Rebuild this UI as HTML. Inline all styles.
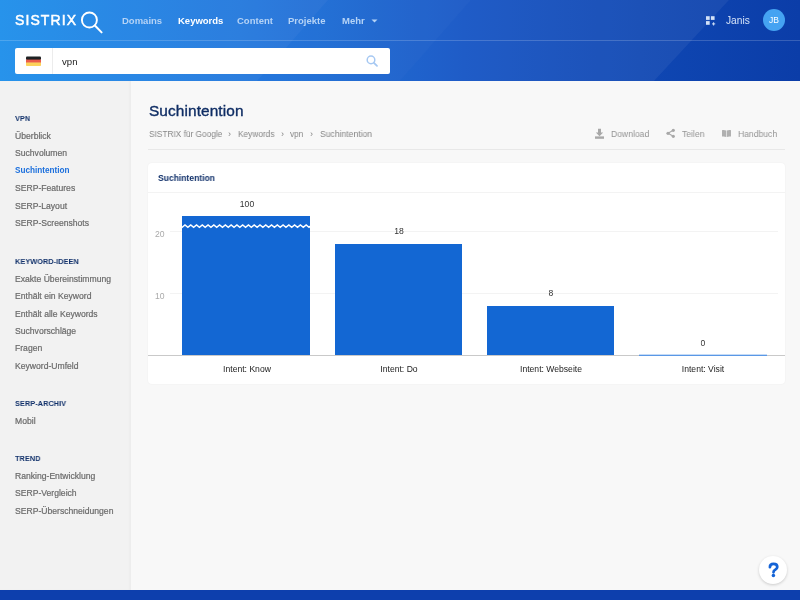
<!DOCTYPE html>
<html><head><meta charset="utf-8"><style>
*{margin:0;padding:0;box-sizing:border-box}
html,body{width:800px;height:600px;overflow:hidden;background:#f8f8f8;font-family:"Liberation Sans",sans-serif}
.t{position:absolute;line-height:0;white-space:nowrap;will-change:transform}
.a{position:absolute}
</style></head><body>
<div class="a" style="left:0;top:0;width:800px;height:81px;overflow:hidden;background:linear-gradient(90deg,#0f87ea 0%,#1470dc 30%,#1353c4 58%,#0f47b3 80%,#0b3da8 100%)"><div class="a" style="left:0;top:0;width:800px;height:81px;background:rgba(255,255,255,0.035);clip-path:polygon(0 0,328px 0,257px 81px,0 81px)"></div><div class="a" style="left:0;top:0;width:800px;height:81px;background:rgba(255,255,255,0.02);clip-path:polygon(0 0,471px 0,400px 81px,0 81px)"></div><div class="a" style="left:0;top:0;width:800px;height:81px;background:rgba(255,255,255,0.055);clip-path:polygon(0 0,729px 0,654px 81px,0 81px)"></div><div class="a" style="left:0;top:40px;width:800px;height:1px;background:rgba(255,255,255,0.18)"></div></div><div class="t" style="left:15px;top:20.35px;font-size:14px;color:#fff;letter-spacing:1.1px;-webkit-text-stroke:0.5px #fff;">SISTRIX</div>
<svg class="a" style="left:78px;top:9px" width="26" height="26" viewBox="0 0 26 26"><circle cx="11.4" cy="11" r="7.5" fill="none" stroke="#fff" stroke-width="1.9"/><line x1="16.9" y1="16.5" x2="23.6" y2="23.4" stroke="#fff" stroke-width="2" stroke-linecap="round"/></svg>
<div class="t" style="left:122px;top:20.91px;font-size:9.5px;color:#b5d3f6;font-weight:bold;">Domains</div>
<div class="t" style="left:177.5px;top:20.91px;font-size:9.5px;color:#fff;font-weight:bold;">Keywords</div>
<div class="t" style="left:237px;top:20.91px;font-size:9.5px;color:#b5d3f6;font-weight:bold;">Content</div>
<div class="t" style="left:288px;top:20.91px;font-size:9.5px;color:#b5d3f6;font-weight:bold;">Projekte</div>
<div class="t" style="left:341.5px;top:20.91px;font-size:9.5px;color:#b5d3f6;font-weight:bold;">Mehr</div>
<svg class="a" style="left:371px;top:19px" width="7" height="4" viewBox="0 0 7 4"><path d="M0.5 0.5H6.5L3.5 3.5Z" fill="#b5d3f6"/></svg>
<svg class="a" style="left:705px;top:15px" width="12" height="12" viewBox="0 0 12 12" fill="#d3e2f7"><rect x="1" y="1.2" width="3.7" height="3.7"/><rect x="5.9" y="1.2" width="3.7" height="3.7"/><rect x="1" y="6.1" width="3.7" height="3.7"/><rect x="8.1" y="7.3" width="1" height="3.2"/><rect x="7" y="8.4" width="3.2" height="1"/></svg>
<div class="t" style="left:726px;top:20.67px;font-size:10.2px;color:#d6e4f8;">Janis</div>
<div class="a" style="left:763px;top:9px;width:22px;height:22px;border-radius:50%;background:#45a3f2"></div>
<div class="t" style="left:774px;top:20.25px;font-size:8.5px;color:#fff;transform:translateX(-50%);">JB</div>
<div class="a" style="left:15px;top:48px;width:375px;height:26px;background:#fff;border-radius:2px"></div>
<div class="a" style="left:52px;top:48px;width:1px;height:26px;background:#ececec"></div>
<svg class="a" style="left:26px;top:56px" width="16" height="11" viewBox="0 0 16 11"><rect x="0" y="0.4" width="15" height="3.6" rx="1" fill="#1e2224"/><rect x="0" y="3.6" width="15" height="3.3" fill="#ea5b4b"/><rect x="0" y="6.7" width="15" height="3.3" rx="0.8" fill="#fcd35b"/><rect x="0" y="6.7" width="15" height="1.5" fill="#fcd35b"/></svg>
<div class="t" style="left:62px;top:61.87px;font-size:9.6px;color:#222;">vpn</div>
<svg class="a" style="left:365px;top:53px" width="16" height="16" viewBox="0 0 16 16"><circle cx="6" cy="6.9" r="3.8" fill="none" stroke="#a6c8f2" stroke-width="1.5"/><line x1="8.9" y1="9.8" x2="12" y2="12.9" stroke="#a6c8f2" stroke-width="1.8" stroke-linecap="round"/></svg>
<div class="a" style="left:0;top:81px;width:131px;height:509px;background:#f2f2f2;box-shadow:inset -2px 0 2px rgba(0,0,0,0.025)"></div>
<div class="t" style="left:15px;top:119.39px;font-size:8.1px;color:#10306a;font-weight:bold;letter-spacing:0.1px;transform:scaleX(0.9);transform-origin:0 0;">VPN</div>
<div class="t" style="left:15px;top:136.22px;font-size:8.6px;color:#6a6a6a;-webkit-text-stroke:0.2px #6a6a6a;">Überblick</div>
<div class="t" style="left:15px;top:153.22px;font-size:8.6px;color:#6a6a6a;-webkit-text-stroke:0.2px #6a6a6a;">Suchvolumen</div>
<div class="t" style="left:15px;top:171.36px;font-size:8.2px;color:#1b6fdd;font-weight:bold;">Suchintention</div>
<div class="t" style="left:15px;top:188.22px;font-size:8.6px;color:#6a6a6a;-webkit-text-stroke:0.2px #6a6a6a;">SERP-Features</div>
<div class="t" style="left:15px;top:206.22px;font-size:8.6px;color:#6a6a6a;-webkit-text-stroke:0.2px #6a6a6a;">SERP-Layout</div>
<div class="t" style="left:15px;top:223.22px;font-size:8.6px;color:#6a6a6a;-webkit-text-stroke:0.2px #6a6a6a;">SERP-Screenshots</div>
<div class="t" style="left:15px;top:262.39px;font-size:8.1px;color:#10306a;font-weight:bold;letter-spacing:0.1px;transform:scaleX(0.9);transform-origin:0 0;">KEYWORD-IDEEN</div>
<div class="t" style="left:15px;top:279.22px;font-size:8.6px;color:#6a6a6a;-webkit-text-stroke:0.2px #6a6a6a;">Exakte Übereinstimmung</div>
<div class="t" style="left:15px;top:296.22px;font-size:8.6px;color:#6a6a6a;-webkit-text-stroke:0.2px #6a6a6a;">Enthält ein Keyword</div>
<div class="t" style="left:15px;top:314.22px;font-size:8.6px;color:#6a6a6a;-webkit-text-stroke:0.2px #6a6a6a;">Enthält alle Keywords</div>
<div class="t" style="left:15px;top:331.22px;font-size:8.6px;color:#6a6a6a;-webkit-text-stroke:0.2px #6a6a6a;">Suchvorschläge</div>
<div class="t" style="left:15px;top:348.22px;font-size:8.6px;color:#6a6a6a;-webkit-text-stroke:0.2px #6a6a6a;">Fragen</div>
<div class="t" style="left:15px;top:366.22px;font-size:8.6px;color:#6a6a6a;-webkit-text-stroke:0.2px #6a6a6a;">Keyword-Umfeld</div>
<div class="t" style="left:15px;top:404.39px;font-size:8.1px;color:#10306a;font-weight:bold;letter-spacing:0.1px;transform:scaleX(0.9);transform-origin:0 0;">SERP-ARCHIV</div>
<div class="t" style="left:15px;top:421.22px;font-size:8.6px;color:#6a6a6a;-webkit-text-stroke:0.2px #6a6a6a;">Mobil</div>
<div class="t" style="left:15px;top:459.39px;font-size:8.1px;color:#10306a;font-weight:bold;letter-spacing:0.1px;transform:scaleX(0.9);transform-origin:0 0;">TREND</div>
<div class="t" style="left:15px;top:476.22px;font-size:8.6px;color:#6a6a6a;-webkit-text-stroke:0.2px #6a6a6a;">Ranking-Entwicklung</div>
<div class="t" style="left:15px;top:493.22px;font-size:8.6px;color:#6a6a6a;-webkit-text-stroke:0.2px #6a6a6a;">SERP-Vergleich</div>
<div class="t" style="left:15px;top:511.22px;font-size:8.6px;color:#6a6a6a;-webkit-text-stroke:0.2px #6a6a6a;">SERP-Überschneidungen</div>
<div class="t" style="left:148.5px;top:110.86px;font-size:15.4px;color:#0f2d64;letter-spacing:0.1px;-webkit-text-stroke:0.35px #0f2d64;">Suchintention</div>
<div class="t" style="left:148.5px;top:134.05px;font-size:9.1px;color:#868686;transform:scaleX(0.912);transform-origin:0 0;">SISTRIX für Google</div>
<div class="t" style="left:228px;top:134.05px;font-size:9.1px;color:#868686;transform:scaleX(0.912);transform-origin:0 0;">›</div>
<div class="t" style="left:237.5px;top:134.05px;font-size:9.1px;color:#868686;transform:scaleX(0.912);transform-origin:0 0;">Keywords</div>
<div class="t" style="left:281px;top:134.05px;font-size:9.1px;color:#868686;transform:scaleX(0.912);transform-origin:0 0;">›</div>
<div class="t" style="left:290px;top:134.05px;font-size:9.1px;color:#868686;transform:scaleX(0.912);transform-origin:0 0;">vpn</div>
<div class="t" style="left:310px;top:134.05px;font-size:9.1px;color:#868686;transform:scaleX(0.912);transform-origin:0 0;">›</div>
<div class="t" style="left:319.5px;top:134.05px;font-size:9.1px;color:#868686;transform:scaleX(0.945);transform-origin:0 0;">Suchintention</div>
<svg class="a" style="left:594px;top:128px" width="11" height="11" viewBox="0 0 11 11" fill="#a8a8a8"><path d="M4 0.8h3v3.8h2.2L5.5 8.2 1.8 4.6H4z"/><rect x="1" y="8.4" width="9" height="2.4"/></svg>
<div class="t" style="left:611px;top:134.05px;font-size:9.1px;color:#939393;transform:scaleX(0.945);transform-origin:0 0;">Download</div>
<svg class="a" style="left:666px;top:128px" width="11" height="11" viewBox="0 0 11 11" fill="#a8a8a8"><circle cx="7.3" cy="2.3" r="1.6"/><circle cx="2" cy="5.3" r="1.6"/><circle cx="7.3" cy="8.3" r="1.6"/><path d="M2 5.3L7.3 2.3M2 5.3L7.3 8.3" stroke="#a8a8a8" stroke-width="1.1"/></svg>
<div class="t" style="left:682px;top:134.05px;font-size:9.1px;color:#939393;transform:scaleX(0.945);transform-origin:0 0;">Teilen</div>
<svg class="a" style="left:721px;top:129px" width="11" height="9" viewBox="0 0 11 9" fill="#b0b0b0"><path d="M1 1.2C2.5 0.8 4 1 5.2 1.6V8C4 7.4 2.5 7.2 1 7.6z"/><path d="M10 1.2C8.5 0.8 7 1 5.8 1.6V8C7 7.4 8.5 7.2 10 7.6z"/></svg>
<div class="t" style="left:737.5px;top:134.05px;font-size:9.1px;color:#939393;transform:scaleX(0.945);transform-origin:0 0;">Handbuch</div>
<div class="a" style="left:148px;top:149px;width:637px;height:1px;background:#e8e8e8"></div>
<div class="a" style="left:148px;top:163px;width:637px;height:221px;background:#fff;border-radius:4px;box-shadow:0 0 2px rgba(0,0,0,0.06)"></div>
<div class="t" style="left:158.3px;top:178.15px;font-size:8.8px;color:#10306a;font-weight:bold;transform:scaleX(0.97);transform-origin:0 0;">Suchintention</div>
<div class="a" style="left:148px;top:192px;width:637px;height:1px;background:#f3f3f3"></div>
<div class="a" style="left:170px;top:231px;width:608px;height:1px;background:#f3f3f3"></div>
<div class="a" style="left:170px;top:293px;width:608px;height:1px;background:#f3f3f3"></div>
<div class="t" style="left:154.5px;top:234.22px;font-size:8.6px;color:#aaa;">20</div>
<div class="t" style="left:154.5px;top:296.22px;font-size:8.6px;color:#aaa;">10</div>
<div class="a" style="left:182px;top:216px;width:128px;height:139px;background:#1367d3"></div>
<svg class="a" style="left:182px;top:222px" width="128" height="8" viewBox="0 0 128 8"><path d="M-2.79 2.90 L0.10 5.40 L2.98 2.90 L5.87 5.40 L8.75 2.90 L11.63 5.40 L14.52 2.90 L17.41 5.40 L20.29 2.90 L23.17 5.40 L26.06 2.90 L28.95 5.40 L31.83 2.90 L34.71 5.40 L37.60 2.90 L40.48 5.40 L43.37 2.90 L46.25 5.40 L49.14 2.90 L52.02 5.40 L54.91 2.90 L57.79 5.40 L60.68 2.90 L63.56 5.40 L66.45 2.90 L69.33 5.40 L72.22 2.90 L75.11 5.40 L77.99 2.90 L80.88 5.40 L83.76 2.90 L86.64 5.40 L89.53 2.90 L92.42 5.40 L95.30 2.90 L98.19 5.40 L101.07 2.90 L103.95 5.40 L106.84 2.90 L109.72 5.40 L112.61 2.90 L115.49 5.40 L118.38 2.90 L121.27 5.40 L124.15 2.90 L127.03 5.40 L129.92 2.90 L132.80 5.40" fill="none" stroke="#fff" stroke-width="1.45"/></svg>
<div class="a" style="left:335px;top:244px;width:127px;height:111px;background:#1367d3"></div>
<div class="a" style="left:487px;top:306px;width:127px;height:49px;background:#1367d3"></div>
<div class="a" style="left:148px;top:355px;width:637px;height:1px;background:#c9c9c9"></div>
<div class="a" style="left:639px;top:355px;width:128px;height:1px;background:#5a98e6"></div><div class="a" style="left:639px;top:354px;width:128px;height:1px;background:rgba(90,152,230,0.35)"></div>
<div class="t" style="left:246.5px;top:204.22px;font-size:8.6px;color:#333;transform:translateX(-50%);">100</div>
<div class="t" style="left:398.5px;top:231.22px;font-size:8.6px;color:#333;transform:translateX(-50%);">18</div>
<div class="t" style="left:550.5px;top:293.22px;font-size:8.6px;color:#333;transform:translateX(-50%);">8</div>
<div class="t" style="left:702.6px;top:343.22px;font-size:8.6px;color:#333;transform:translateX(-50%);">0</div>
<div class="t" style="left:246.5px;top:369.22px;font-size:8.6px;color:#222;transform:translateX(-50%);">Intent: Know</div>
<div class="t" style="left:398.5px;top:369.22px;font-size:8.6px;color:#222;transform:translateX(-50%);">Intent: Do</div>
<div class="t" style="left:550.5px;top:369.22px;font-size:8.6px;color:#222;transform:translateX(-50%);">Intent: Webseite</div>
<div class="t" style="left:703px;top:369.22px;font-size:8.6px;color:#222;transform:translateX(-50%);">Intent: Visit</div>
<div class="a" style="left:0;top:590px;width:800px;height:10px;background:#0d3fad"></div>
<div class="a" style="left:759px;top:556px;width:28px;height:28px;border-radius:50%;background:#fff;box-shadow:0 1px 3px rgba(0,0,0,0.18)"></div>
<svg class="a" style="left:0;top:0" width="800" height="600" viewBox="0 0 800 600"><path d="M769.9 567.2C769.9 565 771.4 563.9 773.5 563.9C775.7 563.9 777.3 565.1 777.3 566.9C777.3 568.6 776 569.3 775 569.9C774 570.5 773.5 571 773.5 572.3" fill="none" stroke="#1463d6" stroke-width="2.7" stroke-linecap="round"/><circle cx="773.4" cy="575.4" r="1.75" fill="#1463d6"/></svg>
</body></html>
